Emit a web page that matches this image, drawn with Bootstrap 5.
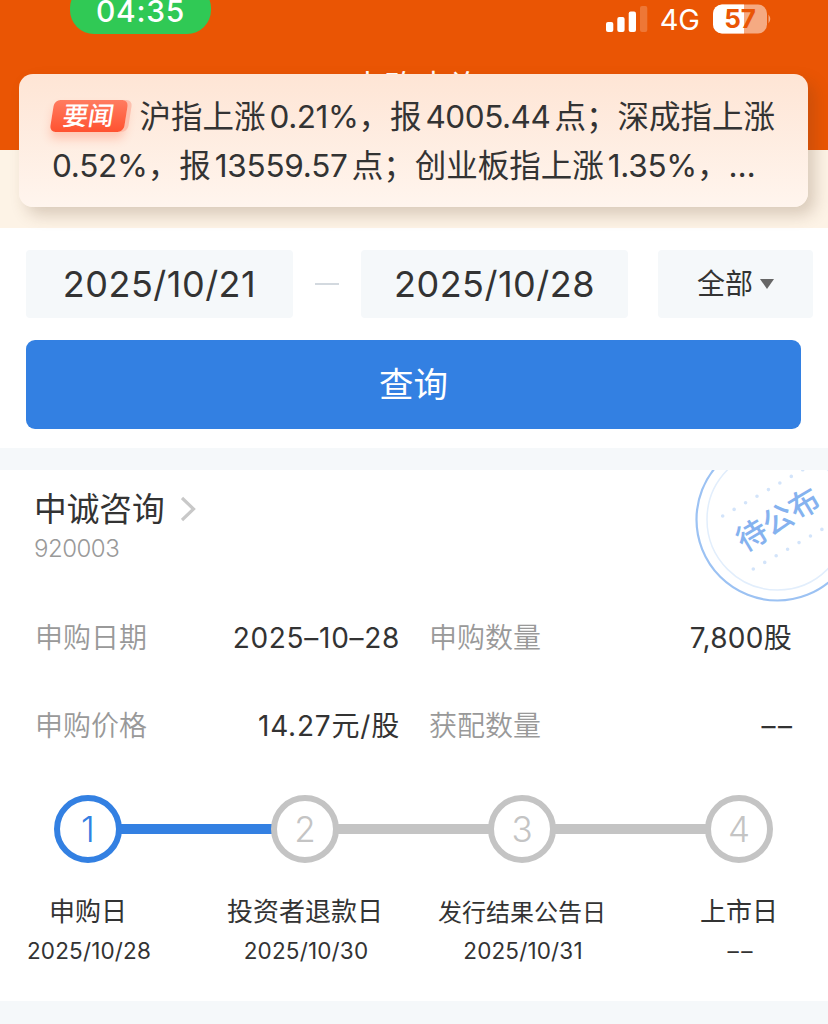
<!DOCTYPE html>
<html lang="zh-CN">
<head>
<meta charset="utf-8">
<meta name="viewport" content="width=device-width, initial-scale=1">
<title>申购查询</title>
<link href="https://cdn.jsdelivr.net/npm/bootstrap@5.3.0/dist/css/bootstrap.min.css" rel="stylesheet">
<style>
  :root { --brand: #ea5504; --blue: #3380e2; --mist: #f5f8fa; --idle: #c4c4c4; --ink: #333; }
  body { font-family: Inter, "Noto Sans CJK SC", sans-serif; color: var(--ink); background: #fff; height: 1024px; overflow: hidden; line-height: 1; }
  .topbar { height: 150px; background: var(--brand); }
  .status { height: 40px; padding-left: 70px; padding-right: 56px; }
  .clock { width: 141px; height: 50px; margin-top: -16px; border-radius: 24px; background: #30c955; font-size: 30px; letter-spacing: .7px; padding-top: 12px; }
  .net { font-size: 29px; margin: 0 13px 0 12px; }
  .page-title { font-size: 33px; margin-top: 28px; padding-left: 6px; }
  .banner { height: 78px; background: #fdf3e6; }
  .flash { left: 19px; top: 74px; width: 789px; height: 133px; border-radius: 14px; padding: 18px 0 0 33px; background: linear-gradient(#fee5d5, #fff5ee); box-shadow: 7px 8px 16px rgba(90,60,30,.22); font-size: 31.5px; z-index: 5; }
  .flash-line { height: 49px; }
  .n { font-size: 31.5px; letter-spacing: -.45px; }
  .flash-line + .flash-line .n { letter-spacing: -.25px; }
  .tag { width: 74px; height: 32px; margin-right: 13.5px; margin-top: -1px; }
  .tag-bg { inset: 0; transform: skewX(-9deg); border-radius: 6px; background: linear-gradient(#ff7c60, #ff5230); box-shadow: 4px 0 0 #fdc0ae, 1px 7px 9px rgba(255,90,50,.25); }
  .tag-text { font-size: 25.5px; font-weight: 500; transform: skewX(-9deg); }
  .filter { height: 220px; padding: 22px 15px 0 26px; }
  .field { height: 68px; border-radius: 4px; background: var(--mist); }
  .date { width: 267px; font-size: 36px; letter-spacing: .5px; font-weight: 370; }
  .dash { width: 24px; height: 2px; background: #d3d9df; margin: 0 22px; }
  .kind { width: 155px; font-size: 28px; margin-left: 30px; }
  .caret { border: 7.5px solid transparent; border-top: 10px solid #666; border-bottom: 0; margin-left: 7px; }
  .query { width: 775px; height: 89px; border-radius: 9px; background: var(--blue); color: #fff; font-size: 34.5px; margin-top: 22px; }
  .gap-band { height: 22px; background: var(--mist); }
  .issue { height: 531px; padding: 22px 36px 0 34px; }
  .stock { font-size: 32.7px; height: 34px; }
  .code { font-size: 24px; font-weight: 350; color: #999; margin-top: 11px; height: 24px; letter-spacing: -.5px; }
  .facts { margin-top: 32.5px; margin-left: 1px; font-size: 28px; }
  .fact { height: 88px; }
  .fact-a { width: 365px; margin-right: 29px; }
  .fact-label { color: #999; font-weight: 350; }
  .num { letter-spacing: .7px; }
  .qty { letter-spacing: .3px; }
  .price { letter-spacing: .8px; }
  .none { letter-spacing: 2.500px; margin-right: -2.500px; }
  .steps { margin: 25.5px 19px 0 20px; }
  .dot { width: 68px; height: 68px; border: 6.5px solid var(--idle); border-radius: 50%; color: var(--idle); font-size: 35px; font-weight: 300; flex: none; }
  .dot-on { border-color: var(--blue); color: var(--blue); }
  .rail { height: 9.5px; background: var(--idle); margin: 0 -2px; }
  .rail-on { background: var(--blue); }
  .step-names { margin: 31.5px -57px 0 -54.500px; }
  .step-name { width: 217px; text-align: center; font-size: 26px; }
  .name { height: 34px; }
  .name-long { font-size: 24px; padding-top: 3px; }
  .when { font-size: 22.5px; letter-spacing: .15px; padding-left: 2px; margin-top: 11px; }
  .stamp { right: 0; top: 0; }
  .issue-end { height: 23px; background: var(--mist); }
</style>
</head>
<body>
<header class="topbar text-white">
  <div class="status d-flex align-items-start">
    <div class="clock d-flex justify-content-center fw-medium">04:35</div>
    <div class="d-flex align-items-center ms-auto" style="height:38px">
      <svg width="42" height="28" viewBox="0 0 42 28" fill="#fff">
        <rect x="0" y="17" width="7.3" height="10" rx="2"/><rect x="11.3" y="12" width="7.3" height="15" rx="2"/>
        <rect x="22.7" y="6.500" width="7.3" height="20.500" rx="2"/><rect x="34" y="1" width="7.3" height="26" rx="2" opacity=".2"/>
      </svg>
      <span class="net">4G</span>
      <svg width="59" height="30" viewBox="0 0 59 30">
        <defs><clipPath id="cell"><rect y=".5" width="54" height="29" rx="9"/></clipPath></defs>
        <g clip-path="url(#cell)"><rect width="54" height="30" fill="#fff" opacity=".5"/><rect width="31" height="30" fill="#fff"/></g>
        <path d="M55.500 10.500q3.500 4.500 0 9z" fill="#fff" opacity=".5"/>
        <text x="27" y="24" text-anchor="middle" font-size="26" font-weight="700" fill="#ea5504">57</text>
      </svg>
    </div>
  </div>
  <h1 class="page-title text-center fw-normal mb-0">申购查询</h1>
</header>
<div class="banner"></div>

<aside class="flash position-absolute">
  <div class="flash-line d-flex align-items-center text-nowrap">
    <span class="tag position-relative d-inline-flex justify-content-center align-items-center text-white">
      <span class="tag-bg position-absolute"></span><span class="tag-text position-relative">要闻</span>
    </span>
    <span>沪指上涨<span class="n ms-1">0.21%</span>，报<span class="n ms-1 me-1">4005.44</span>点；深成指上涨</span>
  </div>
  <div class="flash-line text-nowrap d-flex align-items-center">
    <span><span class="n">0.52%</span>，报<span class="n ms-1 me-1">13559.57</span>点；创业板指上涨<span class="n ms-1">1.35%</span>，<span class="n">…</span></span>
  </div>
</aside>

<section class="filter">
  <div class="d-flex align-items-center">
    <div class="field date d-flex align-items-center justify-content-center">2025/10/21</div>
    <span class="dash"></span>
    <div class="field date d-flex align-items-center justify-content-center">2025/10/28</div>
    <div class="field kind d-flex align-items-center justify-content-center">全部<span class="caret"></span></div>
  </div>
  <button class="query btn border-0 p-0 d-block">查询</button>
</section>
<div class="gap-band"></div>

<main class="issue position-relative overflow-hidden">
  <svg class="stamp position-absolute" width="140" height="140" viewBox="688 470 140 140" fill="none">
    <circle cx="777.500" cy="519.500" r="81" stroke="#9cc2f3" stroke-width="2.200"/>
    <circle cx="777.500" cy="519.500" r="70.500" stroke="#e2eefc" stroke-width="1.500"/>
    <g stroke="#d3e4fa" stroke-width="3.600" stroke-linecap="round" stroke-dasharray="0 13.200">
      <path d="M722.700 516l92-53.100"/><path d="M753.300 569l92-53.100"/>
    </g>
    <text transform="translate(778 519.500) rotate(-31)" text-anchor="middle" y="11" font-size="30.500" font-weight="500" fill="#85b2ef">待公布</text>
  </svg>
  <div class="stock d-flex align-items-center">中诚咨询
    <svg class="ms-3" width="18" height="26" viewBox="0 0 18 26" fill="none" stroke="#c8c8c8" stroke-width="3.200"><path d="M1 2l11.500 11L1 24"/></svg>
  </div>
  <div class="code">920003</div>
  <div class="facts">
    <div class="fact d-flex align-items-center">
      <div class="fact-a d-flex justify-content-between"><span class="fact-label">申购日期</span><span class="num">2025–10–28</span></div>
      <div class="flex-fill d-flex justify-content-between"><span class="fact-label">申购数量</span><span class="qty">7,800股</span></div>
    </div>
    <div class="fact d-flex align-items-center">
      <div class="fact-a d-flex justify-content-between"><span class="fact-label">申购价格</span><span class="price">14.27元/股</span></div>
      <div class="flex-fill d-flex justify-content-between"><span class="fact-label">获配数量</span><span class="none">––</span></div>
    </div>
  </div>
  <div class="steps d-flex align-items-center">
    <div class="dot dot-on d-flex align-items-center justify-content-center">1</div><div class="rail rail-on flex-fill"></div>
    <div class="dot d-flex align-items-center justify-content-center">2</div><div class="rail flex-fill"></div>
    <div class="dot d-flex align-items-center justify-content-center">3</div><div class="rail flex-fill"></div>
    <div class="dot d-flex align-items-center justify-content-center">4</div>
  </div>
  <div class="step-names d-flex">
    <div class="step-name"><div class="name d-flex align-items-center justify-content-center">申购日</div><div class="when">2025/10/28</div></div>
    <div class="step-name"><div class="name d-flex align-items-center justify-content-center">投资者退款日</div><div class="when">2025/10/30</div></div>
    <div class="step-name"><div class="name name-long d-flex align-items-center justify-content-center">发行结果公告日</div><div class="when">2025/10/31</div></div>
    <div class="step-name"><div class="name d-flex align-items-center justify-content-center">上市日</div><div class="when"><span class="none">––</span></div></div>
  </div>
</main>
<div class="issue-end"></div>
<script src="https://cdn.jsdelivr.net/npm/bootstrap@5.3.0/dist/js/bootstrap.bundle.min.js"></script>
</body>
</html>
